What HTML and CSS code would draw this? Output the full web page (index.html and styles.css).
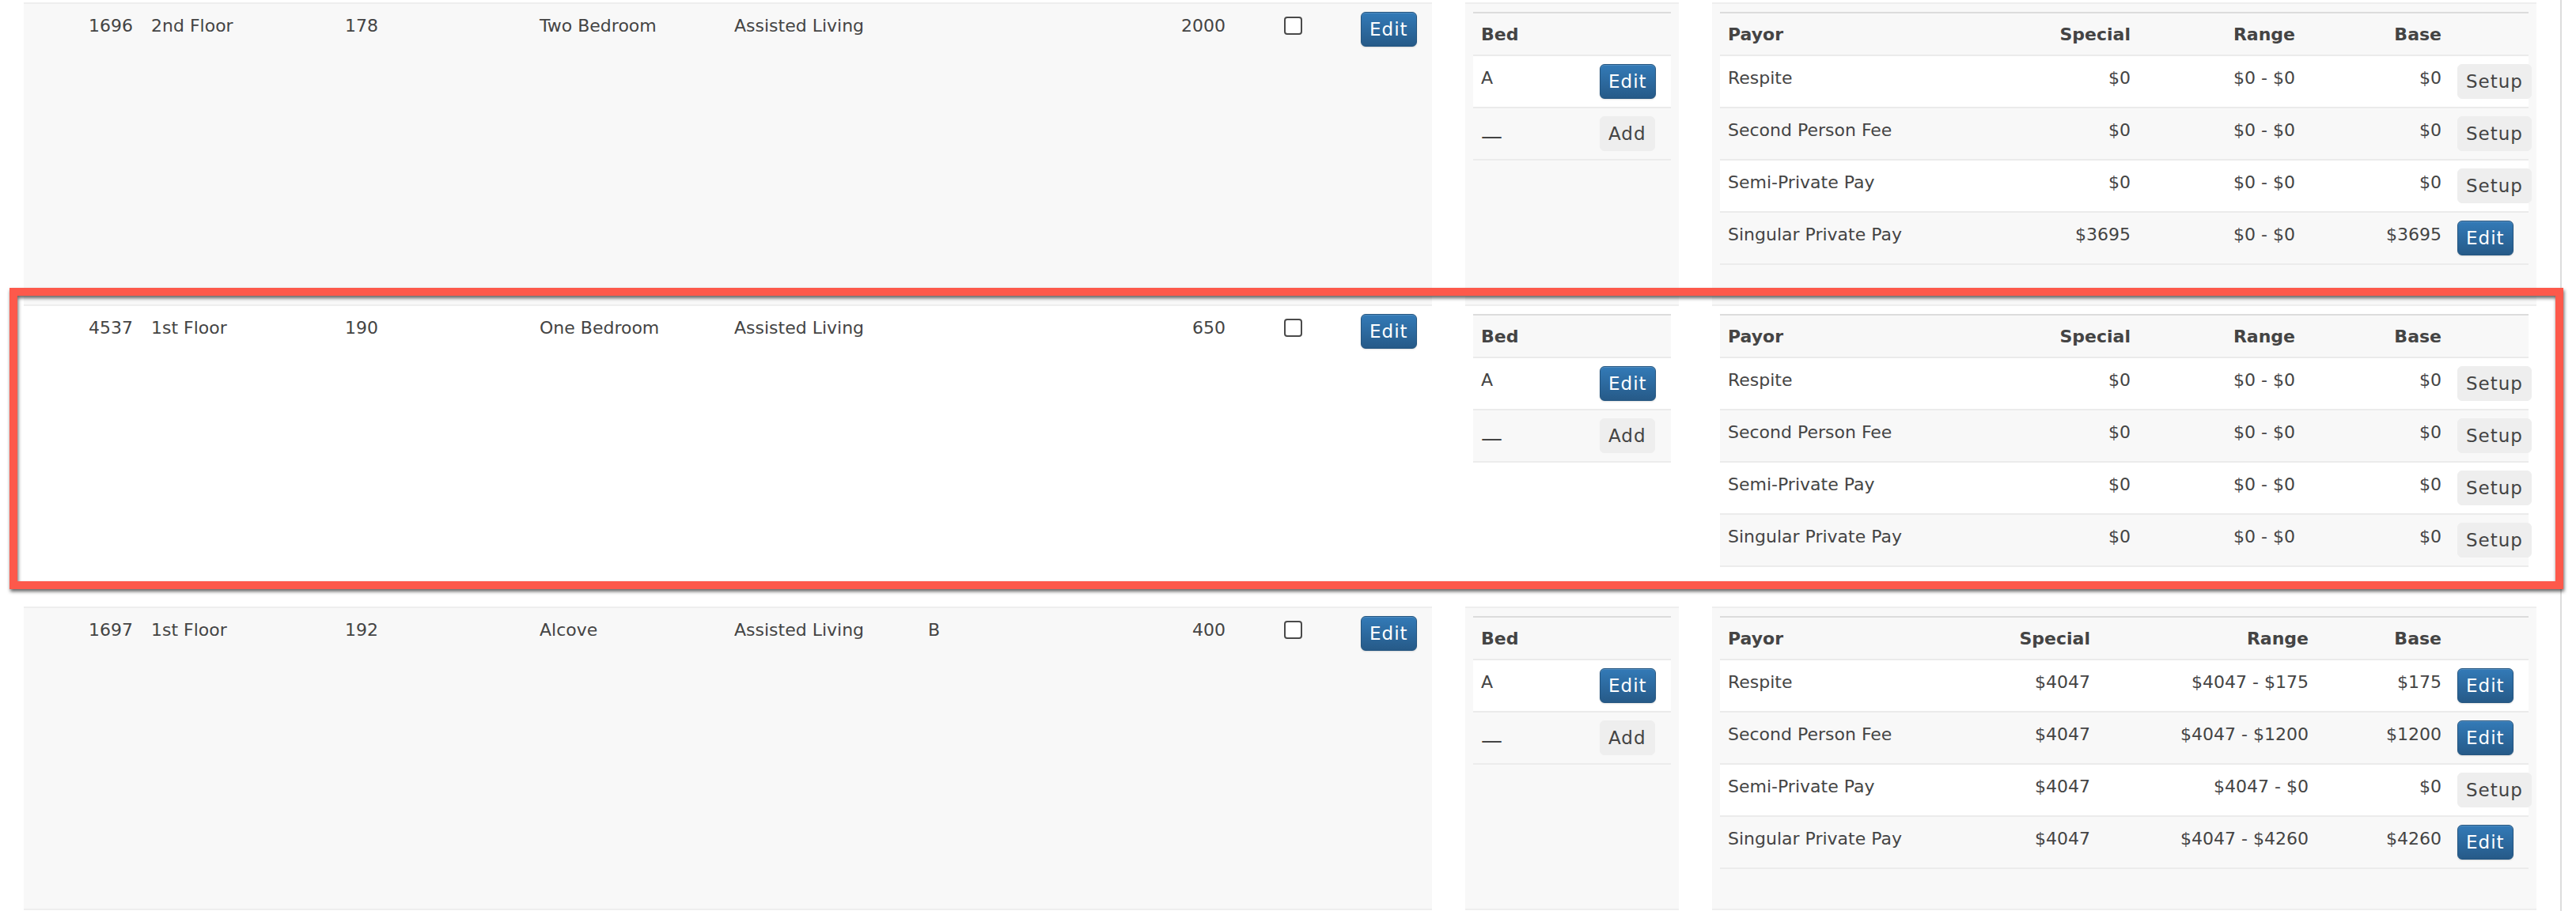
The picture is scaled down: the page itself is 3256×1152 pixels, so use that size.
FILE: index.html
```html
<!DOCTYPE html>
<html lang="en">
<head>
<meta charset="utf-8">
<title>Units</title>
<link rel="stylesheet" href="styles.css">
</head>
<body>
<div class="page">

  <div class="row odd">
    <div class="block main">
      <div class="cell id">1696</div>
      <div class="cell">2nd Floor</div>
      <div class="cell">178</div>
      <div class="cell">Two Bedroom</div>
      <div class="cell">Assisted Living</div>
      <div class="cell"></div>
      <div class="cell num">2000</div>
      <div class="cell"><input type="checkbox" class="chk"></div>
      <div class="cell"><button class="btn primary">Edit</button></div>
    </div>
    <div class="block beds">
      <div class="tbl">
        <div class="tr bed head"><div class="th">Bed</div><div class="th"></div></div>
        <div class="tr bed"><div class="td">A</div><div class="td"><button class="btn primary">Edit</button></div></div>
        <div class="tr bed"><div class="td"><span class="dash">—</span></div><div class="td"><button class="btn plain">Add</button></div></div>
      </div>
    </div>
    <div class="block payors">
      <div class="tbl">
        <div class="tr pay-a head"><div class="th">Payor</div><div class="th right">Special</div><div class="th right">Range</div><div class="th right">Base</div><div class="th"></div></div>
        <div class="tr pay-a"><div class="td">Respite</div><div class="td right">$0</div><div class="td right">$0 - $0</div><div class="td right">$0</div><div class="td"><button class="btn plain">Setup</button></div></div>
        <div class="tr pay-a"><div class="td">Second Person Fee</div><div class="td right">$0</div><div class="td right">$0 - $0</div><div class="td right">$0</div><div class="td"><button class="btn plain">Setup</button></div></div>
        <div class="tr pay-a"><div class="td">Semi-Private Pay</div><div class="td right">$0</div><div class="td right">$0 - $0</div><div class="td right">$0</div><div class="td"><button class="btn plain">Setup</button></div></div>
        <div class="tr pay-a"><div class="td">Singular Private Pay</div><div class="td right">$3695</div><div class="td right">$0 - $0</div><div class="td right">$3695</div><div class="td"><button class="btn primary">Edit</button></div></div>
      </div>
    </div>
  </div>

  <div class="row even">
    <div class="block main">
      <div class="cell id">4537</div>
      <div class="cell">1st Floor</div>
      <div class="cell">190</div>
      <div class="cell">One Bedroom</div>
      <div class="cell">Assisted Living</div>
      <div class="cell"></div>
      <div class="cell num">650</div>
      <div class="cell"><input type="checkbox" class="chk"></div>
      <div class="cell"><button class="btn primary">Edit</button></div>
    </div>
    <div class="block beds">
      <div class="tbl">
        <div class="tr bed head"><div class="th">Bed</div><div class="th"></div></div>
        <div class="tr bed"><div class="td">A</div><div class="td"><button class="btn primary">Edit</button></div></div>
        <div class="tr bed"><div class="td"><span class="dash">—</span></div><div class="td"><button class="btn plain">Add</button></div></div>
      </div>
    </div>
    <div class="block payors">
      <div class="tbl">
        <div class="tr pay-a head"><div class="th">Payor</div><div class="th right">Special</div><div class="th right">Range</div><div class="th right">Base</div><div class="th"></div></div>
        <div class="tr pay-a"><div class="td">Respite</div><div class="td right">$0</div><div class="td right">$0 - $0</div><div class="td right">$0</div><div class="td"><button class="btn plain">Setup</button></div></div>
        <div class="tr pay-a"><div class="td">Second Person Fee</div><div class="td right">$0</div><div class="td right">$0 - $0</div><div class="td right">$0</div><div class="td"><button class="btn plain">Setup</button></div></div>
        <div class="tr pay-a"><div class="td">Semi-Private Pay</div><div class="td right">$0</div><div class="td right">$0 - $0</div><div class="td right">$0</div><div class="td"><button class="btn plain">Setup</button></div></div>
        <div class="tr pay-a"><div class="td">Singular Private Pay</div><div class="td right">$0</div><div class="td right">$0 - $0</div><div class="td right">$0</div><div class="td"><button class="btn plain">Setup</button></div></div>
      </div>
    </div>
  </div>

  <div class="row odd">
    <div class="block main">
      <div class="cell id">1697</div>
      <div class="cell">1st Floor</div>
      <div class="cell">192</div>
      <div class="cell">Alcove</div>
      <div class="cell">Assisted Living</div>
      <div class="cell">B</div>
      <div class="cell num">400</div>
      <div class="cell"><input type="checkbox" class="chk"></div>
      <div class="cell"><button class="btn primary">Edit</button></div>
    </div>
    <div class="block beds">
      <div class="tbl">
        <div class="tr bed head"><div class="th">Bed</div><div class="th"></div></div>
        <div class="tr bed"><div class="td">A</div><div class="td"><button class="btn primary">Edit</button></div></div>
        <div class="tr bed"><div class="td"><span class="dash">—</span></div><div class="td"><button class="btn plain">Add</button></div></div>
      </div>
    </div>
    <div class="block payors">
      <div class="tbl">
        <div class="tr pay-b head"><div class="th">Payor</div><div class="th right">Special</div><div class="th right">Range</div><div class="th right">Base</div><div class="th"></div></div>
        <div class="tr pay-b"><div class="td">Respite</div><div class="td right">$4047</div><div class="td right">$4047 - $175</div><div class="td right">$175</div><div class="td"><button class="btn primary">Edit</button></div></div>
        <div class="tr pay-b"><div class="td">Second Person Fee</div><div class="td right">$4047</div><div class="td right">$4047 - $1200</div><div class="td right">$1200</div><div class="td"><button class="btn primary">Edit</button></div></div>
        <div class="tr pay-b"><div class="td">Semi-Private Pay</div><div class="td right">$4047</div><div class="td right">$4047 - $0</div><div class="td right">$0</div><div class="td"><button class="btn plain">Setup</button></div></div>
        <div class="tr pay-b"><div class="td">Singular Private Pay</div><div class="td right">$4047</div><div class="td right">$4047 - $4260</div><div class="td right">$4260</div><div class="td"><button class="btn primary">Edit</button></div></div>
      </div>
    </div>
  </div>

  <div class="row tail">
    <div class="block main"></div>
    <div class="block beds"></div>
    <div class="block payors"></div>
  </div>

</div>
<div class="highlight"></div>
</body>
</html>
```

FILE: styles.css
```css
* {
  box-sizing: border-box;
}

html,
body {
  margin: 0;
  background: #fff;
}

body {
  position: relative;
  font-family: "DejaVu Sans", Verdana, sans-serif;
  font-size: 22px;
  color: #444;
}

.page {
  width: 3238px;
  padding: 3px 30px 0;
  border-right: 2px solid #ddd;
}

.row {
  display: flex;
  gap: 42px;
  height: 382px;
}

.row.tail {
  height: 6px;
}

.block {
  border-top: 2px solid #eee;
  padding: 10px;
}

.row.odd .block {
  background: #f8f8f8;
}

.row.even .block,
.row.tail .block {
  background: #fff;
}

.main {
  width: 1780px;
  padding: 10px 0;
  display: grid;
  grid-template-columns: 151px 245px 246px 246px 245px 237px 159px 151px 100px;
  align-items: start;
}

.beds {
  width: 270px;
}

.payors {
  width: 1042px;
}

.cell {
  padding: 0 10px;
  line-height: 36px;
  min-height: 44px;
}

.cell.id {
  text-align: right;
  padding-right: 13px;
}

.cell.num {
  text-align: right;
}

.chk {
  -webkit-appearance: none;
  appearance: none;
  display: block;
  width: 23px;
  height: 23px;
  margin: 6px auto 0;
  border: 2px solid #4a4a4a;
  border-radius: 4px;
  background: #fff;
}

.tbl {
  width: 100%;
  background: #fff;
  border-top: 2px solid #dcdcdc;
  border-bottom: 2px solid #ececec;
}

.tr {
  display: grid;
}

.tr.bed {
  grid-template-columns: 150px 100px;
}

.tr.pay-a {
  grid-template-columns: 329px 200px 208px 185px 100px;
}

.tr.pay-b {
  grid-template-columns: 300px 178px 276px 168px 100px;
}

.tr + .tr {
  border-top: 2px solid #ebebeb;
}

.tr.head,
.tr:nth-child(odd) {
  background: #f8f8f8;
}

.tr:nth-child(even) {
  background: #fff;
}

.th {
  padding: 10px 10px 8px;
  line-height: 34px;
  font-weight: bold;
}

.td {
  padding: 10px;
  line-height: 36px;
  min-height: 64px;
  white-space: nowrap;
}

.right {
  text-align: right;
}

.dash {
  font-size: 27px;
  vertical-align: -9px;
  line-height: 1;
}

.btn {
  display: inline-block;
  vertical-align: top;
  height: 44px;
  padding: 0 10px;
  margin: 0;
  font-family: inherit;
  font-size: 23px;
  letter-spacing: 1px;
  line-height: 42px;
  border: 1px solid transparent;
  border-radius: 6px;
  white-space: nowrap;
}

.btn.primary {
  color: #fff;
  background: linear-gradient(to bottom, #337ab7 0%, #265a88 100%);
  border-color: #245580;
  box-shadow: inset 0 1px 0 rgba(255, 255, 255, 0.15), 0 1px 2px rgba(0, 0, 0, 0.12);
}

.btn.plain {
  color: #444;
  background: #eee;
  border-color: #eee;
}

.highlight {
  position: absolute;
  left: 12px;
  top: 364px;
  width: 3228px;
  height: 381px;
  border: 10px solid #fd594b;
  filter: drop-shadow(1px 3px 2px rgba(0, 0, 0, 0.6));
  pointer-events: none;
}
```
